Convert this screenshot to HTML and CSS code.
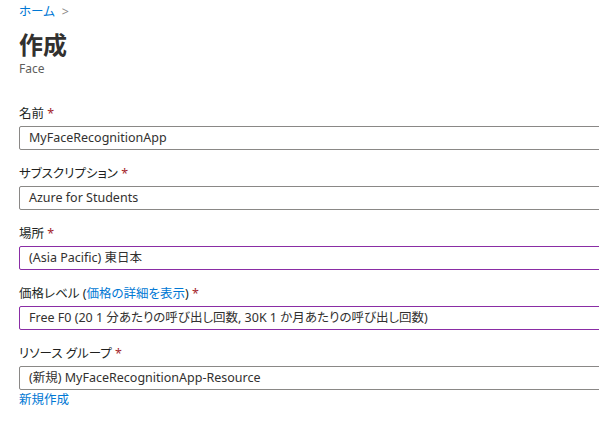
FILE: index.html
```html
<!DOCTYPE html>
<html lang="ja">
<head>
<meta charset="utf-8">
<link rel="stylesheet" href="styles.css">
</head>
<body>
<div class="page">
  <nav class="crumb"><a class="crumb-link">ホーム</a><span class="crumb-sep">&gt;</span></nav>
  <h1 class="title">作成</h1>
  <div class="subtitle">Face</div>

  <div class="field">
    <label class="label">名前 <span class="req">*</span></label>
    <div class="input">MyFaceRecognitionApp</div>
  </div>
  <div class="field">
    <label class="label">サブスクリプション <span class="req">*</span></label>
    <div class="input">Azure for Students</div>
  </div>
  <div class="field">
    <label class="label">場所 <span class="req">*</span></label>
    <div class="input input-purple">(Asia Pacific) 東日本</div>
  </div>
  <div class="field">
    <label class="label">価格レベル (<a class="link">価格の詳細を表示</a>) <span class="req">*</span></label>
    <div class="input input-purple">Free F0 (20 1 分あたりの呼び出し回数, 30K 1 か月あたりの呼び出し回数)</div>
  </div>
  <div class="field field-last">
    <label class="label">リソース グループ <span class="req">*</span></label>
    <div class="input">(新規) MyFaceRecognitionApp-Resource</div>
    <a class="link new-link">新規作成</a>
  </div>
</div>
</body>
</html>
```
FILE: styles.css
```css
html, body {
  margin: 0;
  padding: 0;
  background: #ffffff;
  overflow: hidden;
}
body {
  font-family: "Noto Sans", "Noto Sans CJK JP", sans-serif;
  font-size: 12.5px;
  color: #323130;
  font-feature-settings: "palt";
}
.page {
  width: 700px;
  padding: 2px 0 0 19px;
}
.crumb {
  display: flex;
  align-items: center;
  gap: 7px;
  line-height: 20px;
  height: 20px;
}
.crumb-link {
  color: #0078d4;
}
.crumb-sep {
  color: #8a8886;
}
.title {
  margin: 7px 0 0 0;
  font-size: 24px;
  line-height: 32px;
  font-weight: 700;
  color: #323130;
}
.subtitle {
  font-size: 12px;
  line-height: 16px;
  color: #605e5c;
  margin-bottom: 27px;
}
.field {
  display: flex;
  flex-direction: column;
  margin-bottom: 14px;
}
.label {
  line-height: 20px;
  height: 20px;
  margin-bottom: 2px;
  color: #201f1e;
}
.req {
  color: #a4262c;
}
.link {
  color: #0078d4;
}
.input {
  box-sizing: border-box;
  height: 24px;
  border: 1px solid #8a8886;
  border-radius: 2px;
  padding: 0 9px;
  line-height: 22px;
  white-space: nowrap;
  color: #323130;
}
.input-purple {
  border-color: #8a2da5;
}
.new-link {
  line-height: 20px;
}
```
